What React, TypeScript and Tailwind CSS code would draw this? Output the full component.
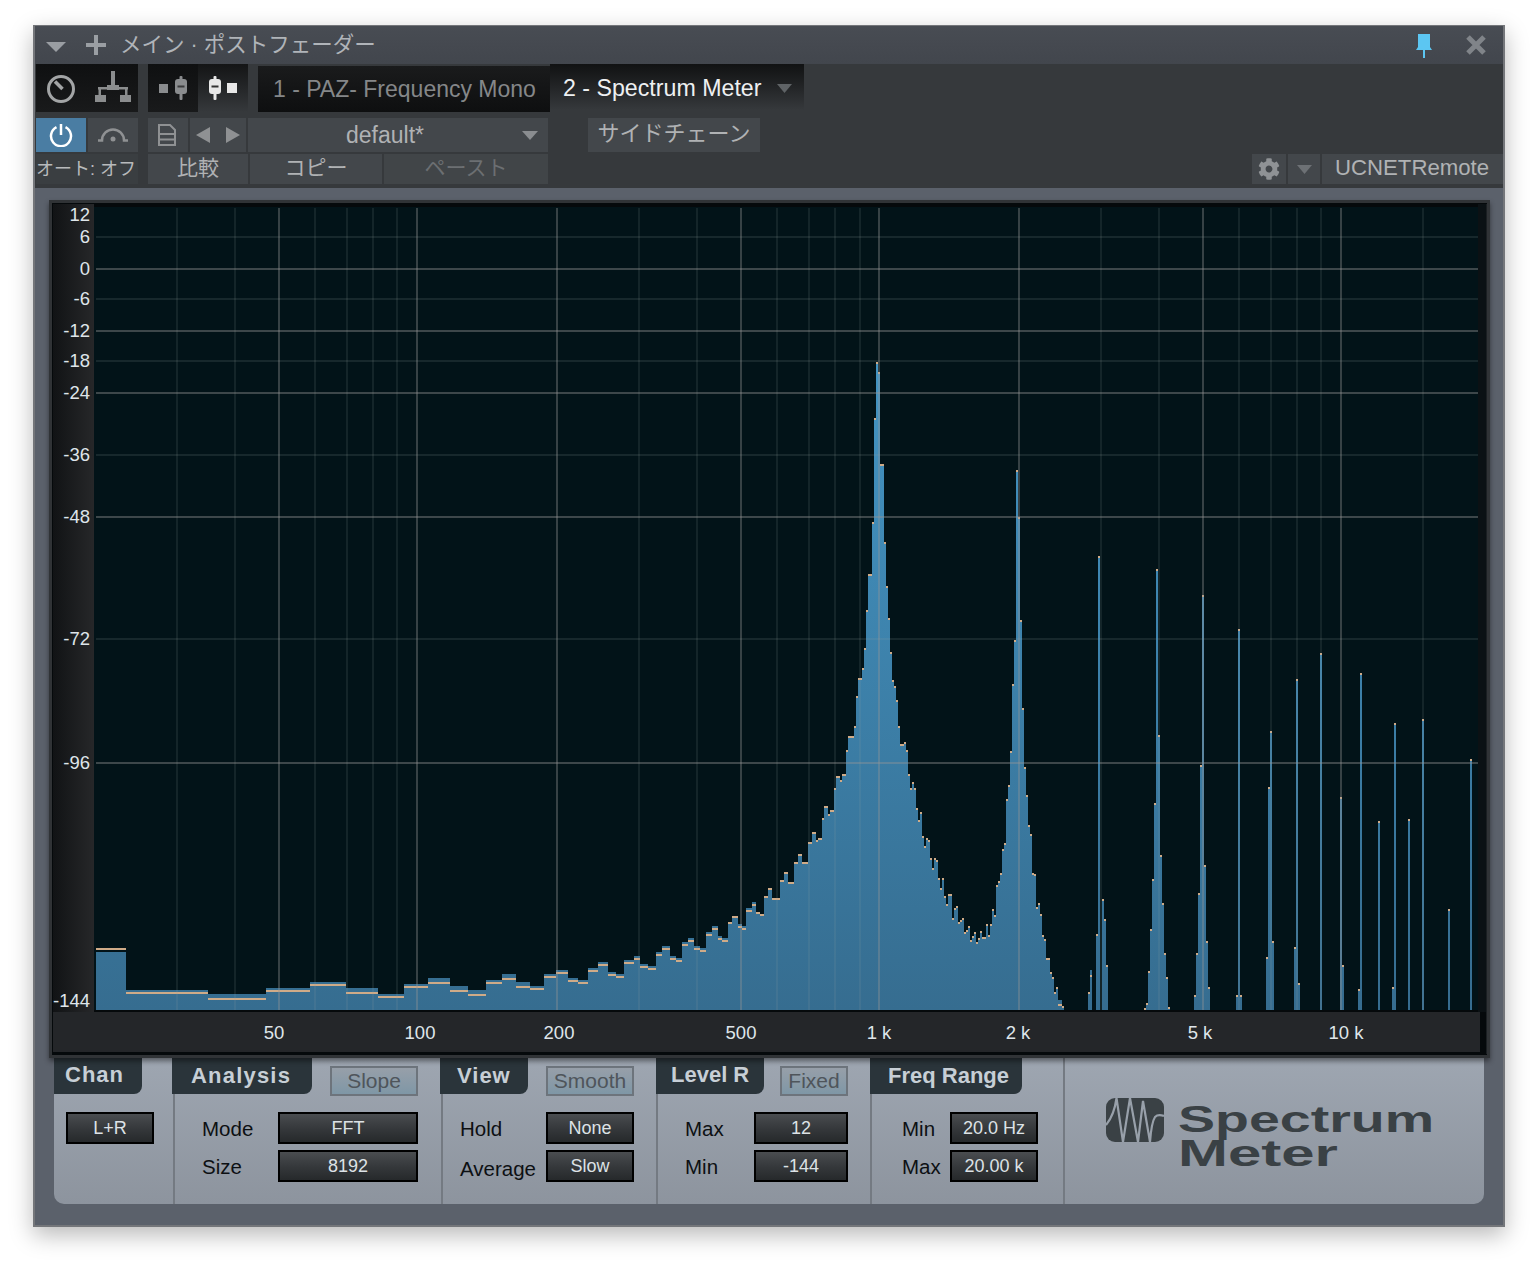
import React from "react";
import { FaCog } from "react-icons/fa";

type Bar = [number, number, number, number?];

const BARS: Bar[] = [
  [96,126,952,948],[126,208,990,992],[208,266,994,998],[266,310,988,990],[310,346,982,984],[346,378,988,992],
  [378,404,994,996],[404,428,984,986],[428,450,978,982],[450,468,986,990],[468,486,990,994],[486,502,980,982],
  [502,516,974,978],[516,530,982,986],[530,544,986,988],[544,556,974,976],[556,568,970,972],[568,578,978,980],
  [578,588,980,982],[588,598,968,970],[598,608,962,964],[608,616,972,974],[616,624,974,976],[624,634,960,962],
  [634,640,956,958],[640,648,964,966],[648,656,966,968],[656,662,952,954],[662,670,946,948],[670,676,956,958],
  [676,682,958,960],[682,688,942,944],[688,694,938,940],[694,700,946,948],[700,706,948,950],[706,712,932,934],
  [712,718,926,928],[718,722,936,938],[722,728,938,940],[728,732,922],[732,738,916],[738,742,924,926],
  [742,746,926,928],[746,752,908,910],[752,756,902,904],[756,760,912],[760,764,914],[764,768,896],[768,772,888],
  [772,780,898],[780,784,880],[784,788,872],[788,794,882],[794,798,862],[798,802,854],[802,808,862],[808,812,842],
  [812,816,832],[816,818,840],[818,822,838],[822,824,818],[824,828,806],[828,830,814],[830,834,810],[834,836,788],
  [836,840,776],[840,842,780],[842,846,774],[846,848,750],[848,854,736],[854,856,726],[856,858,696],[858,862,678],
  [862,864,668],[864,866,648],[866,868,610],[868,872,574],[872,874,522],[874,876,418],[876,878,362],[878,880,372],
  [880,884,464],[884,886,542],[886,888,586],[888,890,618],[890,892,652],[892,894,680],[894,896,686],[896,898,700],
  [898,900,726],[900,904,744],[904,906,742],[906,908,750],[908,910,774],[910,912,788],[912,914,782],[914,916,788],
  [916,918,808],[918,920,820],[920,922,812],[922,924,836],[924,926,846],[926,928,838],[928,930,840],[930,932,858],
  [932,934,868],[934,936,858],[936,938,860],[938,940,878],[940,942,888],[942,944,878],[944,946,896],[946,948,904],
  [948,952,894],[952,954,918],[954,956,908],[956,958,906],[958,960,922],[960,962,920],[962,964,918],[964,966,932],
  [966,968,930],[968,970,926],[970,972,940],[972,974,936],[974,976,932],[976,978,942],[978,980,938],[980,982,931],
  [982,984,937],[984,986,937],[986,988,924],[988,990,935],[990,992,924],[992,994,909],[994,996,915],[996,998,885],
  [998,1000,881],[1000,1002,873],[1002,1004,849],[1004,1006,843],[1006,1008,799],[1008,1010,785],[1010,1012,751],
  [1012,1014,684],[1014,1016,640],[1016,1018,470],[1018,1020,517],[1020,1022,620],[1022,1024,708],[1024,1026,767],
  [1026,1028,795],[1028,1030,825],[1030,1032,834],[1032,1034,873],[1034,1036,874],[1036,1038,907],[1038,1040,903],
  [1040,1042,914],[1042,1044,935],[1044,1046,939],[1046,1050,958],[1050,1052,972],[1052,1054,977],[1054,1056,992],
  [1056,1058,987],[1058,1062,1000,1004],[1062,1064,1006],
  [1088,1090,992],[1090,1092,970,975],[1096,1098,934],[1098,1100,556],[1102,1104,899],[1104,1106,919],[1106,1108,965],
  [1144,1146,1008],[1146,1148,1003],[1148,1150,971],[1150,1152,929],[1152,1154,879],[1154,1156,803],[1156,1158,569],
  [1158,1160,735],[1160,1162,855],[1162,1164,903],[1164,1166,953],[1166,1168,977],[1168,1170,1007],
  [1194,1196,995],[1196,1198,953],[1198,1200,893],[1200,1202,765],[1202,1204,595],[1204,1206,865],[1206,1208,941],[1208,1210,987],
  [1236,1238,995],[1238,1240,629],[1240,1242,995],
  [1266,1268,957],[1268,1270,787],[1270,1272,731],[1272,1274,941],
  [1294,1296,947],[1296,1298,679],[1298,1300,983],
  [1320,1322,653],[1340,1342,797],[1342,1344,965],[1358,1360,989],[1360,1362,673],[1378,1380,821],
  [1392,1394,987],[1394,1396,723],[1408,1410,819],[1422,1424,719],[1448,1450,909],[1470,1472,759],
];

const V_BRIGHT = [279, 417, 557, 741, 879, 1019, 1203, 1341];
const V_DIM = [177, 235, 315, 347, 373, 397, 639, 697, 777, 809, 835, 860, 1101, 1159, 1239, 1271, 1297, 1321, 1423];
const H_BRIGHT = [269, 331, 393, 517, 763];
const H_DIM = [237, 299, 361, 455, 639];

const Y_LABELS: [string, number][] = [
  ["12", 215],["6", 237],["0", 269],["-6", 299],["-12", 331],["-18", 361],["-24", 393],
  ["-36", 455],["-48", 517],["-72", 639],["-96", 763],["-144", 1001],
];
const X_LABELS: [string, number][] = [
  ["50", 274],["100", 420],["200", 559],["500", 741],["1 k", 879],["2 k", 1018],["5 k", 1200],["10 k", 1346],
];

function Spectrum() {
  return (
    <svg viewBox="52 203 1435 852" className="block h-[852px] w-[1435px]">
      <defs>
        <linearGradient id="bar" gradientUnits="userSpaceOnUse" x1="0" y1="360" x2="0" y2="1010">
          <stop offset="0" stopColor="#4394c3" />
          <stop offset="1" stopColor="#366d90" />
        </linearGradient>
        <linearGradient id="axis" x1="0" y1="0" x2="1" y2="0">
          <stop offset="0" stopColor="#111315" />
          <stop offset="1" stopColor="#262729" />
        </linearGradient>
      </defs>
      <rect x="52" y="203" width="1435" height="852" fill="#05090b" />
      <rect x="53" y="204" width="41" height="808" fill="url(#axis)" />
      <rect x="53" y="1012" width="1427" height="40" fill="#242629" />
      <rect x="94" y="207" width="1384" height="803" fill="#021318" />
      <rect x="1478" y="204" width="8" height="808" fill="#0b1114" />
      <rect x="1486" y="204" width="1" height="850" fill="#1b1f22" />
      <g shapeRendering="crispEdges">
        {BARS.map(([x0, x1, top, marker], i) => (
          <g key={i}>
            <rect x={x0} y={top} width={x1 - x0} height={1010 - top} fill="url(#bar)" />
            <rect x={x0} y={marker ?? top} width={x1 - x0} height="2" fill="#cfab88" />
          </g>
        ))}
        {V_DIM.map((x) => (
          <rect key={x} x={x - 1} y="208" width="2" height="802" fill="#96a0a0" fillOpacity="0.13" />
        ))}
        {V_BRIGHT.map((x) => (
          <rect key={x} x={x - 1} y="208" width="2" height="802" fill="#969696" fillOpacity="0.36" />
        ))}
        {H_DIM.map((y) => (
          <rect key={y} x="96" y={y - 1} width="1382" height="2" fill="#96a0a0" fillOpacity="0.15" />
        ))}
        {H_BRIGHT.map((y) => (
          <rect key={y} x="96" y={y - 1} width="1382" height="2" fill="#969696" fillOpacity="0.4" />
        ))}
      </g>
      {Y_LABELS.map(([t, y]) => (
        <text key={t} x="90" y={y} dy="0.31em" textAnchor="end" fontSize="18.5" fill="#dfe5ea">
          {t}
        </text>
      ))}
      {X_LABELS.map(([t, x]) => (
        <text key={t} x={x} y="1033" dy="0.31em" textAnchor="middle" fontSize="18.5" fill="#dfe5ea">
          {t}
        </text>
      ))}
    </svg>
  );
}

function Triangle({ className }: { className: string }) {
  return (
    <svg viewBox="0 0 16 10" preserveAspectRatio="none" className={className}>
      <path d="M0 0H16L8 10Z" fill="currentColor" />
    </svg>
  );
}

function TitleBar() {
  return (
    <div className="flex h-[38px] items-center bg-linear-to-b from-[#484c53] to-[#42464d] pl-[11px] pr-[17px]">
      <Triangle className="mt-[3px] h-[10px] w-[20px] text-[#9a9ea3]" />
      <svg viewBox="0 0 20 20" className="ml-[20px] h-[20px] w-[20px] text-[#9a9ea3]">
        <path d="M8 0h4v8h8v4h-8v8H8v-8H0V8h8Z" fill="currentColor" />
      </svg>
      <span className="ml-[14px] pt-[2px] text-[21.5px] leading-none whitespace-pre text-[#b0b4b9]">メイン<span className="[font-family:'Liberation_Sans',sans-serif]"> · </span>ポストフェーダー</span>
      <svg viewBox="0 0 16 24" className="ml-auto mt-[2px] h-[24px] w-[16px]">
        <path d="M2 0H14V13L16 16H9V24H7V16H0L2 13Z" fill="#5cc6f2" />
      </svg>
      <svg viewBox="0 0 20 20" className="ml-[34px] h-[20px] w-[20px]">
        <path d="M2 2 18 18M18 2 2 18" stroke="#808489" strokeWidth="5" />
      </svg>
    </div>
  );
}

function KnobIcon() {
  return (
    <svg viewBox="0 0 30 30" className="mt-[2px] -ml-[1px] h-[30px] w-[30px]">
      <circle cx="15" cy="15" r="12.5" fill="none" stroke="#a3a5a6" strokeWidth="3" />
      <path d="M9 7.5 16.5 15" stroke="#a3a5a6" strokeWidth="3.5" />
    </svg>
  );
}

function RoutingIcon() {
  return (
    <svg viewBox="0 0 36 32" className="mb-[3px] h-[32px] w-[36px]">
      <g fill="#8b8d8e">
        <rect x="16" y="0" width="4" height="14" />
        <rect x="12" y="14" width="12" height="5" />
        <rect x="3" y="16" width="30" height="2.5" />
        <rect x="3.5" y="16" width="2.5" height="10" />
        <rect x="30" y="16" width="2.5" height="10" />
        <rect x="0" y="24" width="11" height="7" />
        <rect x="25" y="24" width="11" height="7" />
      </g>
    </svg>
  );
}

function FaderGlyph({ color, slot }: { color: string; slot: string }) {
  return (
    <svg viewBox="0 0 12 24" className="h-[24px] w-[12px]">
      <rect x="4.5" y="0" width="3" height="24" rx="1" fill={color} />
      <rect x="0" y="3" width="12" height="15" rx="3" fill={color} />
      <rect x="2.5" y="9.5" width="7" height="2" fill={slot} />
    </svg>
  );
}

function DocIcon() {
  return (
    <svg viewBox="0 0 18 22" className="-ml-[2px] h-[22px] w-[18px]" fill="none" stroke="#8f9193" strokeWidth="2">
      <path d="M1 1H12L17 6V21H1Z" />
      <path d="M1 10H17M1 15.5H17" />
    </svg>
  );
}

function ToolBar() {
  const cell = "flex items-center justify-center bg-[#43474b] text-[#b0b2b4]";
  return (
    <div className="bg-[#36393c] pb-[4px] pl-[1px] text-[#b0b2b4]">
      <div className="flex h-[48px] items-start">
        <div className="flex h-[48px] w-[102px] bg-linear-to-b from-[#0f1011] to-[#191a1b]">
          <div className="flex w-[51px] items-center justify-center"><KnobIcon /></div>
          <div className="flex w-[51px] items-center justify-center"><RoutingIcon /></div>
        </div>
        <div className="ml-[10px] flex h-[48px] w-[100px]">
          <div className="flex w-[50px] items-center justify-center gap-[7px] bg-linear-to-b from-[#0f1011] to-[#191a1b]">
            <span className="h-[9px] w-[9px] bg-[#8a8c8e]" />
            <FaderGlyph color="#8a8c8e" slot="#3a3b3c" />
          </div>
          <div className="flex w-[50px] items-center justify-center gap-[6px] bg-linear-to-b from-[#141516] to-[#36393c]">
            <FaderGlyph color="#e8e8e8" slot="#333333" />
            <span className="h-[10px] w-[10px] bg-[#e8e8e8]" />
          </div>
        </div>
        <div className="ml-[10px] flex h-[48px] items-start">
          <div className="mt-[2px] flex h-[46px] w-[292px] items-center bg-linear-to-b from-[#1a1b1c] to-[#0e0f10] pl-[15px] text-[23px] whitespace-pre text-[#858789]">1 - PAZ- Frequency Mono</div>
          <div className="flex h-[46px] w-[254px] items-center bg-linear-to-b from-[#111213] to-[#36393c] pl-[13px] pt-[2px] text-[23.2px] whitespace-pre text-[#eef0f2]">
            2 - Spectrum Meter
            <Triangle className="ml-[16px] h-[9px] w-[15px] text-[#5f6366]" />
          </div>
        </div>
      </div>
      <div className="mt-[6px] flex h-[34px]">
        <div className="flex w-[50px] items-center justify-center bg-[#4a7da3]">
          <svg viewBox="0 0 24 24" className="h-[24px] w-[24px]" fill="none" stroke="#ffffff" strokeWidth="2.5">
            <path d="M7.5 4.2a10 10 0 1 0 9 0" />
            <path d="M12 1v11" />
          </svg>
        </div>
        <div className={`ml-[2px] w-[50px] ${cell}`}>
          <svg viewBox="0 0 30 14" className="h-[14px] w-[30px]" fill="none" stroke="#8f9193" strokeWidth="2.5">
            <path d="M0 12.5H4a11 11 0 0 1 22 0H30" />
            <circle cx="15" cy="11" r="2.5" fill="#8f9193" stroke="none" />
          </svg>
        </div>
        <div className={`ml-[10px] w-[40px] ${cell}`}><DocIcon /></div>
        <div className={`ml-[2px] w-[56px] gap-[16px] ${cell}`}>
          <svg viewBox="0 0 14 16" className="h-[16px] w-[14px]"><path d="M14 0V16L0 8Z" fill="#8f9193" /></svg>
          <svg viewBox="0 0 14 16" className="h-[16px] w-[14px]"><path d="M0 0V16L14 8Z" fill="#8f9193" /></svg>
        </div>
        <div className="ml-[2px] flex w-[300px] items-center bg-[#43474b] pl-[98px] pr-[10px] text-[23px]">
          default*
          <Triangle className="ml-auto h-[9px] w-[16px] text-[#8a8d90]" />
        </div>
        <div className={`ml-[40px] w-[172px] pb-[3px] text-[22px] ${cell}`}>サイドチェーン</div>
      </div>
      <div className="mt-[2px] flex h-[30px]">
        <div className="flex w-[102px] items-center justify-center bg-[#3a3e41] pr-[2px] text-[18px] whitespace-pre text-[#b8babc]">オート: オフ</div>
        <div className={`ml-[10px] w-[100px] pb-[2px] text-[21px] ${cell}`}>比較</div>
        <div className={`ml-[2px] w-[132px] pb-[2px] text-[21px] ${cell}`}>コピー</div>
        <div className="ml-[2px] flex w-[164px] items-center justify-center bg-[#414548] pb-[2px] text-[21px] text-[#6c6f72]">ペースト</div>
        <div className={`ml-auto w-[34px] ${cell}`}><FaCog className="h-[22px] w-[22px] text-[#8f9295]" /></div>
        <div className={`ml-[2px] w-[32px] ${cell}`}><Triangle className="h-[9px] w-[15px] text-[#6d7175]" /></div>
        <div className="ml-[2px] flex w-[181px] items-center bg-[#43474b] pb-[2px] pl-[13px] text-[22.2px]">UCNETRemote</div>
      </div>
    </div>
  );
}

function DarkButton({ className, children }: { className: string; children: React.ReactNode }) {
  return (
    <div className={`flex h-[32px] items-center justify-center border-2 border-black bg-linear-to-b from-[#4a4d50] via-[#36393c] to-[#26292b] text-[18px] text-[#dde2e6] ${className}`}>
      {children}
    </div>
  );
}

function Toggle({ className, children }: { className: string; children: React.ReactNode }) {
  return (
    <div className={`mt-[8px] flex h-[30px] items-center justify-center border-2 border-[#6d747c] bg-linear-to-b from-[#979fa9] to-[#7f97a6] text-[21px] text-[#4f555b] ${className}`}>
      {children}
    </div>
  );
}

const tabCls = "flex h-[36px] items-center rounded-br-[8px] bg-[#2a343a] text-[22px] font-bold text-[#c7cfd6]";
const headCls = "flex h-[36px]";
const rowsCls = "flex flex-col gap-[6px] pt-[18px]";
const rowCls = "flex h-[32px] items-center text-[20.5px] text-[#0d1013] [&>span]:pt-[2px]";
const dividerCls = "border-l-2 border-[#747a82]";

function ControlPanel() {
  return (
    <div className="ml-[19px] flex h-[146px] w-[1430px] rounded-b-[10px] bg-linear-to-b from-[#9ea6b1] to-[#8d949e]">
      <div className="w-[119px]">
        <div className={`w-[88px] pb-[3px] pl-[11px] tracking-[1px] ${tabCls}`}>Chan</div>
        <div className={`pl-[12px] ${rowsCls}`}>
          <DarkButton className="w-[88px]">L+R</DarkButton>
        </div>
      </div>

      <div className={`w-[268px] ${dividerCls}`}>
        <div className={headCls}>
          <div className={`-ml-[3px] w-[140px] pb-[1px] pl-[19px] tracking-[1.2px] ${tabCls}`}>Analysis</div>
          <Toggle className="ml-[18px] w-[88px]">Slope</Toggle>
        </div>
        <div className={`pl-[27px] ${rowsCls}`}>
          <div className={rowCls}><span className="w-[76px]">Mode</span><DarkButton className="w-[140px]">FFT</DarkButton></div>
          <div className={rowCls}><span className="w-[76px]">Size</span><DarkButton className="w-[140px]">8192</DarkButton></div>
        </div>
      </div>

      <div className={`w-[215px] ${dividerCls}`}>
        <div className={headCls}>
          <div className={`-ml-[3px] w-[88px] pb-[1px] pl-[17px] tracking-[1px] ${tabCls}`}>View</div>
          <Toggle className="ml-[18px] w-[88px]">Smooth</Toggle>
        </div>
        <div className={`pl-[17px] ${rowsCls}`}>
          <div className={rowCls}><span className="w-[86px]">Hold</span><DarkButton className="w-[88px]">None</DarkButton></div>
          <div className={rowCls}><span className="mt-[4px] w-[86px]">Average</span><DarkButton className="w-[88px]">Slow</DarkButton></div>
        </div>
      </div>

      <div className={`w-[214px] ${dividerCls}`}>
        <div className={headCls}>
          <div className={`-ml-[2px] w-[108px] pb-[3px] pl-[15px] ${tabCls}`}>Level R</div>
          <Toggle className="ml-[16px] w-[68px]">Fixed</Toggle>
        </div>
        <div className={`pl-[27px] ${rowsCls}`}>
          <div className={rowCls}><span className="w-[69px]">Max</span><DarkButton className="w-[94px]">12</DarkButton></div>
          <div className={rowCls}><span className="w-[69px]">Min</span><DarkButton className="w-[94px]">-144</DarkButton></div>
        </div>
      </div>

      <div className={`w-[193px] ${dividerCls}`}>
        <div className={`-ml-[2px] w-[152px] pb-[1px] pl-[18px] ${tabCls}`}>Freq Range</div>
        <div className={`pl-[30px] ${rowsCls}`}>
          <div className={rowCls}><span className="w-[48px]">Min</span><DarkButton className="w-[88px]">20.0 Hz</DarkButton></div>
          <div className={rowCls}><span className="w-[48px]">Max</span><DarkButton className="w-[88px]">20.00 k</DarkButton></div>
        </div>
      </div>

      <div className={`flex flex-1 items-start pl-[41px] pt-[40px] ${dividerCls}`}>
        <svg viewBox="0 0 58 44" className="h-[44px] w-[58px]">
          <rect x="0" y="0" width="58" height="44" rx="9" fill="#3a4145" />
          <path d="M0 27C5 21 9 11 10.5 0L17 44 24 0 32 44 37 3 44 44C45 31 47 22 49 19 51 17 55 17 58 18" fill="none" stroke="#98a0aa" strokeWidth="2.2" />
        </svg>
        <div className="ml-[14px] mt-[5px] flex flex-col text-[37px] leading-[34px] font-bold text-[#3a4145]">
          <span className="origin-left scale-x-[1.5] whitespace-pre">Spectrum</span>
          <span className="origin-left scale-x-[1.62] whitespace-pre">Meter</span>
        </div>
      </div>
    </div>
  );
}

export default function App() {
  return (
    <div className="h-[1268px] w-[1538px] bg-white pl-[33px] pt-[25px] [font-family:'Liberation_Sans','Noto_Sans_CJK_JP',sans-serif]">
      <div className="h-[1202px] w-[1472px] border-2 border-t border-[#74767a] bg-[#5b616b] shadow-[0_8px_22px_rgba(0,0,0,0.28)]">
        <TitleBar />
        <ToolBar />
        <div className="relative z-10 ml-[14px] mt-[12px] h-[858px] w-[1441px] border-[3px] border-[#303336] shadow-[0_3px_5px_rgba(0,0,0,0.45)]">
          <Spectrum />
        </div>
        <ControlPanel />
      </div>
    </div>
  );
}
